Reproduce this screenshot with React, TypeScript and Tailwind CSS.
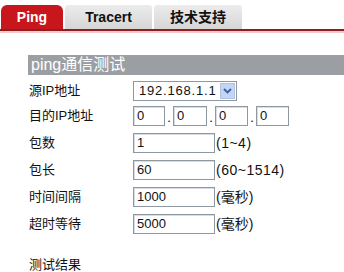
import React from "react";

const font = { fontFamily: '"Liberation Sans", "Noto Sans CJK SC", sans-serif' };

function Box({ value, w }: { value: string; w: string }) {
  return (
    <div className={`${w} h-[20px] border border-[#8e98a3] bg-white flex items-center pl-[3px] text-[13px] text-[#111] shadow-[inset_1px_1px_0_#d8dde3]`}>
      {value}
    </div>
  );
}

function Row({ label, children, className = "" }: { label: string; children: React.ReactNode; className?: string }) {
  return (
    <div className={`flex items-center h-[20px] ${className}`}>
      <div className="w-[105px] pl-[1px] text-[13px] text-[#111]">{label}</div>
      <div className="flex items-center">{children}</div>
    </div>
  );
}

export default function App() {
  return (
    <div className="w-[344px] h-[272px] bg-white overflow-hidden" style={font}>
      {/* Tabs */}
      <div className="pt-[5px] pl-[1px] flex items-end gap-[2px] h-[29px]">
        <div className="w-[62px] h-[24px] rounded-t-[6px] bg-[#c7161c] text-white font-bold text-[14px] flex items-center justify-center">
          Ping
        </div>
        <div className="w-[87px] h-[24px] rounded-t-[3px] bg-gradient-to-b from-[#ececec] to-[#d6d6d6] text-[#111] font-bold text-[14px] flex items-center justify-center">
          Tracert
        </div>
        <div className="w-[88px] h-[24px] rounded-t-[3px] bg-gradient-to-b from-[#ececec] to-[#d6d6d6] text-[#111] font-bold text-[14px] flex items-center justify-center">
          技术支持
        </div>
      </div>
      <div className="h-[2px] bg-[#8c1f22]" />
      <div className="h-[2px] bg-[#f4c6c6]" />

      {/* Section header */}
      <div className="ml-[28px] mt-[22px] h-[20px] bg-[#9b9fa4] text-white text-[16px] leading-[20px] pl-[3px]">
        ping通信测试
      </div>

      <div className="ml-[28px] mt-[6px] flex flex-col">
        <Row label="源IP地址">
          <div className="w-[104px] h-[20px] border border-[#8e98a3] bg-white flex items-center">
            <div className="flex-1 pl-[5px] text-[13px] tracking-[0.8px] text-[#111] whitespace-nowrap">192.168.1.1</div>
            <div className="w-[15px] h-[16px] mr-[1px] bg-[#c5d5f0] border border-[#b0c3e6] flex items-center justify-center">
              <svg width="9" height="6" viewBox="0 0 9 6">
                <path d="M1 1 L4.5 4.5 L8 1" fill="none" stroke="#3b5ea8" strokeWidth="1.8" />
              </svg>
            </div>
          </div>
        </Row>
        <Row label="目的IP地址" className="mt-[5px]">
          <Box value="0" w="w-[32px]" />
          <span className="w-[8px] text-center text-[13px] self-end leading-[16px]">.</span>
          <Box value="0" w="w-[34px]" />
          <span className="w-[8px] text-center text-[13px] self-end leading-[16px]">.</span>
          <Box value="0" w="w-[33px]" />
          <span className="w-[8px] text-center text-[13px] self-end leading-[16px]">.</span>
          <Box value="0" w="w-[33px]" />
        </Row>
        <Row label="包数" className="mt-[7px]">
          <Box value="1" w="w-[82px]" />
          <span className="ml-[1px] text-[14px] tracking-[0.5px] text-[#111]">(1~4)</span>
        </Row>
        <Row label="包长" className="mt-[7px]">
          <Box value="60" w="w-[82px]" />
          <span className="ml-[1px] text-[14px] tracking-[0.5px] text-[#111]">(60~1514)</span>
        </Row>
        <Row label="时间间隔" className="mt-[7px]">
          <Box value="1000" w="w-[82px]" />
          <span className="ml-[1px] text-[14px] text-[#111]">(毫秒)</span>
        </Row>
        <Row label="超时等待" className="mt-[7px]">
          <Box value="5000" w="w-[82px]" />
          <span className="ml-[1px] text-[14px] text-[#111]">(毫秒)</span>
        </Row>
        <div className="mt-[23px] pl-[1px] text-[13px] leading-[16px] text-[#111]">测试结果</div>
      </div>
    </div>
  );
}
